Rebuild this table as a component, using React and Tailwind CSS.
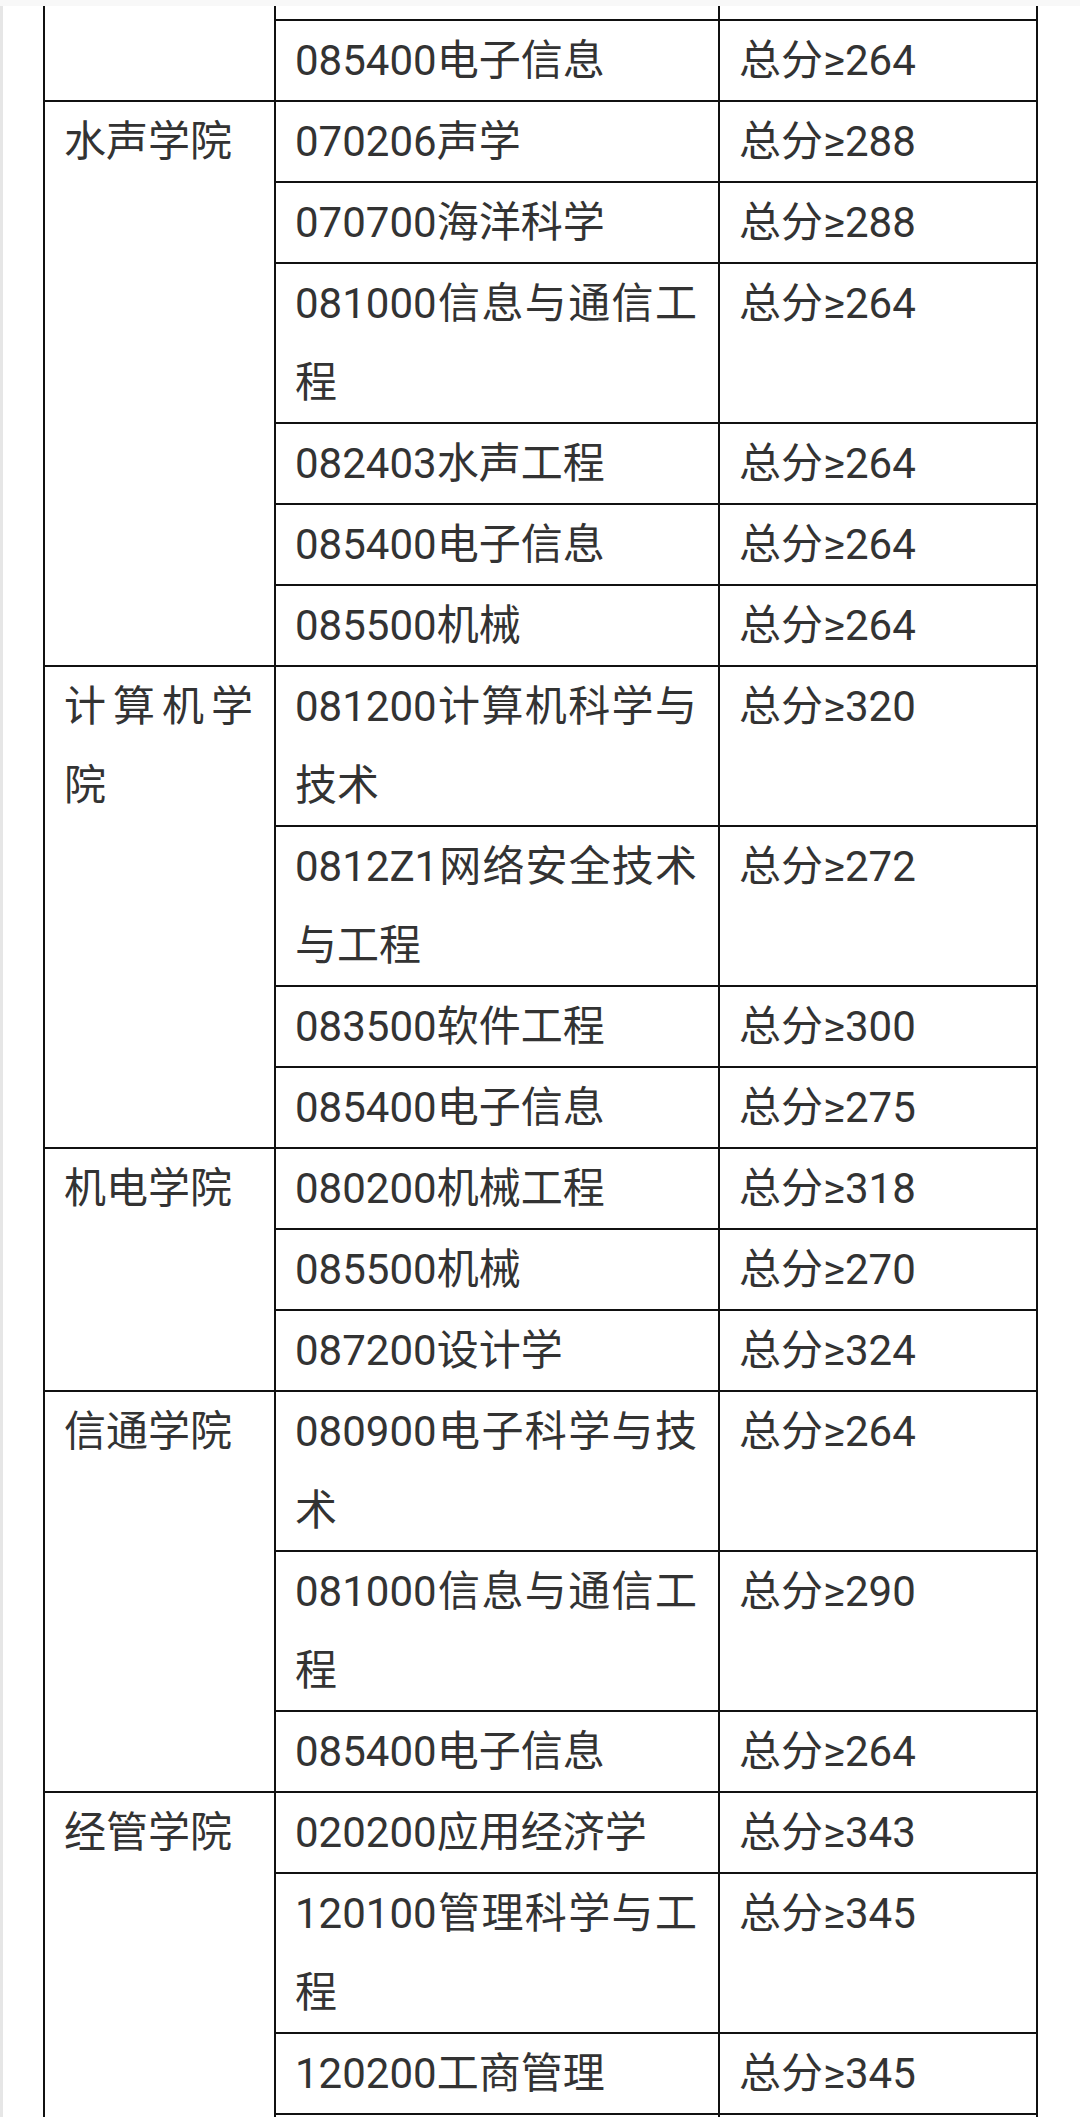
import React from "react";

const groups = [
  {
    name: [],
    rows: [
      { major: [""], score: "" },
      { major: ["085400电子信息"], score: "总分≥264" },
    ],
  },
  {
    name: ["水声学院"],
    rows: [
      { major: ["070206声学"], score: "总分≥288" },
      { major: ["070700海洋科学"], score: "总分≥288" },
      { major: ["081000信息与通信工", "程"], score: "总分≥264" },
      { major: ["082403水声工程"], score: "总分≥264" },
      { major: ["085400电子信息"], score: "总分≥264" },
      { major: ["085500机械"], score: "总分≥264" },
    ],
  },
  {
    name: ["计算机学", "院"],
    rows: [
      { major: ["081200计算机科学与", "技术"], score: "总分≥320" },
      { major: ["0812Z1网络安全技术", "与工程"], score: "总分≥272" },
      { major: ["083500软件工程"], score: "总分≥300" },
      { major: ["085400电子信息"], score: "总分≥275" },
    ],
  },
  {
    name: ["机电学院"],
    rows: [
      { major: ["080200机械工程"], score: "总分≥318" },
      { major: ["085500机械"], score: "总分≥270" },
      { major: ["087200设计学"], score: "总分≥324" },
    ],
  },
  {
    name: ["信通学院"],
    rows: [
      { major: ["080900电子科学与技", "术"], score: "总分≥264" },
      { major: ["081000信息与通信工", "程"], score: "总分≥290" },
      { major: ["085400电子信息"], score: "总分≥264" },
    ],
  },
  {
    name: ["经管学院"],
    rows: [
      { major: ["020200应用经济学"], score: "总分≥343" },
      { major: ["120100管理科学与工", "程"], score: "总分≥345" },
      { major: ["120200工商管理"], score: "总分≥345" },
      { major: [""], score: "" },
    ],
  },
];

const cell =
  "border-2 border-[#111] pl-[19px] pr-[21px] py-0 align-top text-[42px] leading-[79px] text-[#333]";

function Lines({ lines }) {
  return lines.map((t, i) => (
    <div
      key={i}
      className={
        i < lines.length - 1 ? "text-justify [text-align-last:justify]" : "text-left"
      }
    >
      {t || "\u00a0"}
    </div>
  ));
}

export default function App() {
  return (
    <div className="w-[1080px] h-[2117px] overflow-hidden bg-white flex flex-col font-['Roboto','Noto_Sans_CJK_SC',sans-serif]">
      <div className="h-[6px] shrink-0 bg-[#f8f8f8] relative z-10" />
      <div className="flex flex-1 min-h-0">
        <div className="w-[3px] shrink-0 bg-[#e6e6e6]" />
        <div className="flex-1 overflow-hidden bg-white">
          <table className="table-fixed border-collapse w-[993px] mt-[-68px] ml-[40px]">
            <colgroup>
              <col className="w-[231px]" />
              <col className="w-[444px]" />
              <col className="w-[318px]" />
            </colgroup>
            <tbody>
              {groups.map((g, gi) =>
                g.rows.map((r, ri) => (
                  <tr key={gi + "-" + ri}>
                    {ri === 0 && (
                      <td rowSpan={g.rows.length} className={cell}>
                        <Lines lines={g.name.length ? g.name : [""]} />
                      </td>
                    )}
                    <td className={cell}>
                      <Lines lines={r.major} />
                    </td>
                    <td className={cell}>
                      <div>{r.score || "\u00a0"}</div>
                    </td>
                  </tr>
                ))
              )}
            </tbody>
          </table>
        </div>
      </div>
    </div>
  );
}
